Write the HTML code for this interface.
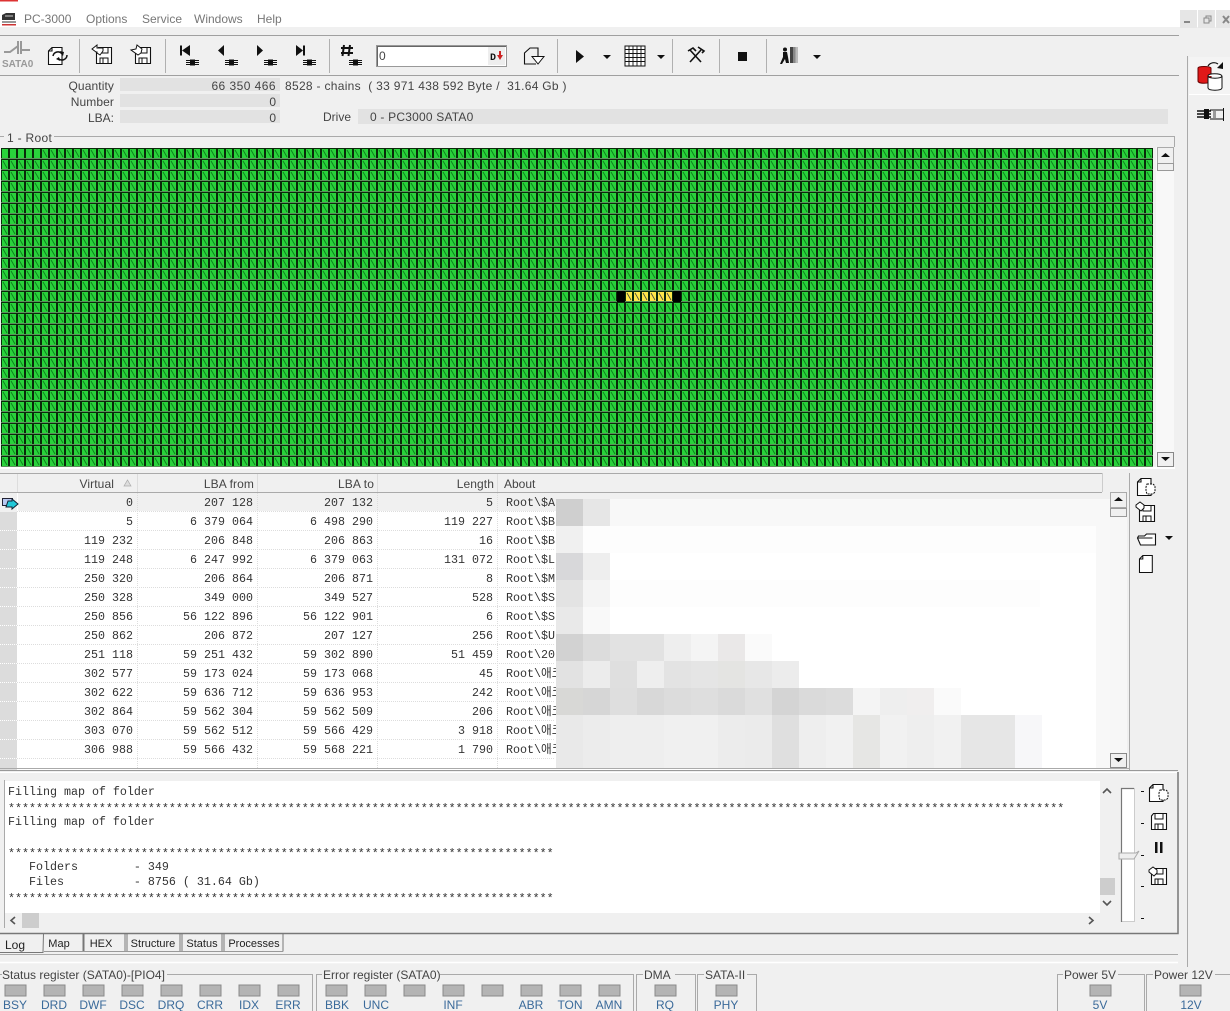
<!DOCTYPE html>
<html><head><meta charset="utf-8"><style>
html,body{margin:0;padding:0;background:#f0f0f0;width:1230px;height:1011px;overflow:hidden}
svg{display:block}
text{font-family:"Liberation Sans","Noto Sans CJK KR",sans-serif;font-size:12px;fill:#444}
.m text,text.m{font-family:"Liberation Mono","Noto Sans CJK KR",monospace;font-size:11.67px;fill:#333}
.e text{text-anchor:end}
.l text{fill:#3a6a9a;text-anchor:middle;font-size:12px}
.g text{fill:#777}
.t text{fill:#222;font-size:11px;text-anchor:middle}
</style></head><body>
<svg width="1230" height="1011" viewBox="0 0 1230 1011" xmlns="http://www.w3.org/2000/svg">
<defs>
<pattern id="c" x="1" y="148" width="8" height="11" patternUnits="userSpaceOnUse">
<rect width="8" height="11" fill="#0a2a0a"/><rect y="10" width="8" height="1" fill="#5c8f5c"/><rect x="1" y="1" width="6" height="9" fill="#29d23b"/><path d="M2 2L6 9" stroke="#0d7d1c" stroke-width=".9"/>
</pattern>
<g id="trk"><path d="M0 1.500h13M0 3.500h13M0 5.500h13" stroke="#111" stroke-width="1.100"/><rect x="4" y="0.500" width="5" height="6" fill="#111"/></g>
<g id="fl"><path d="M2.500.5H15.500V16.500H.5V3Z" fill="#fff" stroke="#111" stroke-width="1.100"/><path d="M4 .5V6H12V.5M4 16.500V11H12V16.500M7 11V16" fill="none" stroke="#111"/></g>
<g id="doc"><path d="M4 .5H14V17.500H.5V4ZM4 .5V4H.5" fill="#fff" stroke="#111" stroke-width="1.100"/></g>
<g id="led"><rect width="21" height="11" fill="#b4b4b4" stroke="#8a8a8a"/></g>
</defs>
<rect width="1230" height="1011" fill="#f0f0f0"/>
<!-- title / menu -->
<rect width="1230" height="27" fill="#fff"/>
<rect x="0" y="0" width="18" height="1.500" fill="#d33"/>
<rect x="1180" y="10" width="17" height="18" fill="#e6e6e6"/><rect x="1198" y="10" width="17" height="18" fill="#e6e6e6"/><rect x="1216" y="10" width="14" height="18" fill="#e6e6e6"/>
<path d="M1184 22h6" stroke="#888" stroke-width="2"/><path d="M1204 18v5h5v-5zM1206 18v-2h5v5h-2" fill="none" stroke="#888"/><path d="M1223 16l6 7M1229 16l-6 7" stroke="#888" stroke-width="2"/>
<path d="M2 20V15l4-2h9v7z" fill="#333"/><path d="M5 16h8" stroke="#ccc"/><rect x="2" y="24" width="14" height="1.500" fill="#c33"/><rect x="2" y="21" width="14" height="2" fill="#999"/>
<g class="g"><text x="24" y="23">PC-3000</text><text x="86" y="23">Options</text><text x="142" y="23">Service</text><text x="194" y="23">Windows</text><text x="257" y="23">Help</text></g>
<!-- toolbar -->
<path d="M0 35.500H1179M0 75.500H1179" stroke="#a0a0a0"/>
<path d="M79.500 39V73M165.500 39V73M329.500 39V73M557.500 39V73M672.500 39V73M719.500 39V73M766.500 39V73" stroke="#b0b0b0"/>
<g stroke="#999" stroke-width="2" fill="none"><path d="M4 52h6l8-6M18 41v13M21 41v13M21 50h9"/></g>
<text x="2" y="67" style="font-size:10px;font-weight:bold;fill:#999">SATA0</text>
<use href="#doc" transform="translate(48,47)"/>
<path d="M53 56a5 5 0 0 1 9-2M67 55a5 5 0 0 1-9 3" fill="none" stroke="#111" stroke-width="1.500"/><path d="M60 51l4 1-1 4zM60 61l-4-2 3-2z" fill="#111"/>
<use href="#fl" transform="translate(96,47)"/><path d="M92 49l5-4v3h6v3l-3 4-3-2v-1h-1z" fill="#fff" stroke="#111"/>
<use href="#fl" transform="translate(135,47)"/><path d="M142 49l-5-4-1 4-5 1 7 5 3-2z" fill="#fff" stroke="#111"/>
<path d="M181 45.500v10" stroke="#111" stroke-width="2"/><path d="M190 45v11l-8-5.500z" fill="#111"/><use href="#trk" transform="translate(186,59)"/>
<path d="M224 45v11l-6-5.500z" fill="#111"/><use href="#trk" transform="translate(225,59)"/>
<path d="M257 45v11l6-5.500z" fill="#111"/><use href="#trk" transform="translate(264,59)"/>
<path d="M296 45v11l7-5.500z" fill="#111"/><path d="M304 45.500v10" stroke="#111" stroke-width="2"/><use href="#trk" transform="translate(303,59)"/>
<path d="M344 45l-1.500 11M350 45l-1.500 11M341 48h12M341 53h12" stroke="#111" stroke-width="2" fill="none"/><use href="#trk" transform="translate(349,59)"/>
<!-- input -->
<rect x="376.500" y="45.500" width="130" height="21" fill="#fff" stroke="#999"/><path d="M377.500 66V46.500H506" stroke="#666" fill="none"/>
<rect x="488" y="47" width="17" height="18" fill="#eee"/>
<text x="490" y="60" class="m" style="font-size:10px;font-weight:bold;fill:#111">D</text><path d="M499 51h2v4h2l-3 5-3-5h2z" fill="#c22"/>
<text x="379" y="60">0</text>
<path d="M538 56V48H530L524.500 53V64H536" fill="none" stroke="#111" stroke-width="1.100"/><path d="M532 56.500H544L538 64Z" fill="#fff" stroke="#111"/>
<path d="M576 50v13l8-6.500z" fill="#111"/><path d="M603 55h8l-4 4z" fill="#111"/>
<rect x="625" y="46" width="20" height="20" fill="#fff" stroke="#111"/><path d="M625 49.500H645M625 53.500H645M625 57.500H645M625 61.500H645M629 46V66M633 46V66M637 46V66M641 46V66" stroke="#111" stroke-width=".9"/>
<path d="M657 55h8l-4 4z" fill="#111"/>
<path d="M690 62l11-12M690 50l11 12M688 51l5-3 3 3M698 47l6 4-2 2" stroke="#111" stroke-width="1.600" fill="none"/>
<rect x="738" y="52" width="9" height="9" fill="#111"/>
<rect x="790" y="47" width="3" height="16" fill="#444"/><rect x="793" y="47" width="2.500" height="16" fill="#888"/><rect x="795.500" y="47" width="2.500" height="16" fill="#bbb"/>
<circle cx="785" cy="49.500" r="2" fill="#111"/><path d="M783 52h4l1 5 1 6h-3l-1-4-3 5h-2l3-7z" fill="#111"/>
<path d="M813 55h8l-4 4z" fill="#111"/>
<!-- info -->
<rect x="120" y="78" width="160" height="13" fill="#e2e2e2"/><rect x="120" y="94" width="160" height="13" fill="#e2e2e2"/><rect x="120" y="110" width="160" height="13" fill="#e2e2e2"/><rect x="358" y="109" width="810" height="15" fill="#e2e2e2"/>
<g class="e"><text x="114" y="90" letter-spacing=".1">Quantity</text><text x="114" y="106" letter-spacing=".1">Number</text><text x="114" y="122">LBA:</text><text x="276" y="90" letter-spacing=".45">66 350 466</text><text x="276" y="106">0</text><text x="276" y="122">0</text></g>
<text x="285" y="90" xml:space="preserve" letter-spacing=".3">8528 - chains  ( 33 971 438 592 Byte /  31.64 Gb )</text>
<text x="323" y="121">Drive</text><text x="370" y="121" letter-spacing=".2">0 - PC3000 SATA0</text>
<!-- map -->
<path d="M0 136.500H1174.500V147" stroke="#aaa" fill="none"/>
<rect x="4" y="130" width="50" height="13" fill="#f0f0f0"/><text x="7" y="142" letter-spacing=".3">1 - Root</text>
<rect x="1" y="148" width="1152" height="319" fill="url(#c)"/>
<g fill="#29d23b"><rect x="2" y="149" width="6" height="9"/><rect x="10" y="149" width="6" height="9"/><rect x="18" y="149" width="6" height="9"/><rect x="26" y="149" width="6" height="9"/><rect x="34" y="149" width="6" height="9"/></g>
<rect x="617" y="291" width="8" height="11" fill="#000"/><rect x="673" y="291" width="8" height="11" fill="#000"/>
<g fill="#ffe64a"><rect x="626" y="292" width="6" height="9"/><rect x="634" y="292" width="6" height="9"/><rect x="642" y="292" width="6" height="9"/><rect x="650" y="292" width="6" height="9"/><rect x="658" y="292" width="6" height="9"/><rect x="666" y="292" width="6" height="9"/></g>
<path d="M627 293l4 7M635 293l4 7M643 293l4 7M651 293l4 7M659 293l4 7M667 293l4 7" stroke="#444" stroke-width=".8"/>
<rect x="1156" y="147" width="18" height="320" fill="#f8f8f8"/>
<rect x="1157.500" y="147.500" width="16" height="16" fill="#f0f0f0" stroke="#aaa"/><path d="M1161 157h9l-4.500-4z" fill="#111"/><rect x="1157.500" y="163.500" width="16" height="7" fill="#f0f0f0" stroke="#999"/>
<rect x="1157.500" y="452.500" width="16" height="14" fill="#f0f0f0" stroke="#888"/><path d="M1161 457h9l-4.500 4z" fill="#111"/>
<rect x="0" y="467" width="1175" height="2" fill="#fff"/>
<!-- table -->
<rect x="0" y="492" width="1110" height="278" fill="#fff"/>
<rect x="18" y="492" width="1092" height="19" fill="#f0f0f0"/>
<rect x="0" y="492" width="17" height="278" fill="#dcdcdc"/>
<rect x="0" y="492" width="17" height="20" fill="#f0f0f0"/>
<path d="M0 473.500H1102M0 492.500H1102" stroke="#aaa"/><path d="M1102.500 473V492" stroke="#ccc"/>
<path d="M17.500 474V492M137.500 474V492M257.500 474V492M377.500 474V492M497.500 474V492" stroke="#ddd"/>
<g stroke="#ddd" stroke-dasharray="1 1"><path d="M17 511.500H555M17 530.500H555M17 549.500H555M17 568.500H555M17 587.500H555M17 606.500H555M17 625.500H555M17 644.500H555M17 663.500H555M17 682.500H555M17 701.500H555M17 720.500H555M17 739.500H555M17 758.500H555"/><path d="M137.500 493V768M257.500 493V768M377.500 493V768M497.500 493V768"/></g>
<path d="M0 530.500H17M0 549.500H17M0 568.500H17M0 587.500H17M0 606.500H17M0 625.500H17M0 644.500H17M0 663.500H17M0 682.500H17M0 701.500H17M0 720.500H17M0 739.500H17M0 758.500H17" stroke="#fff" stroke-dasharray="1 1"/>
<g class="e"><text x="114" y="488" letter-spacing=".1">Virtual</text><text x="254" y="488" letter-spacing=".1">LBA from</text><text x="374" y="488" letter-spacing=".1">LBA to</text><text x="494" y="488" letter-spacing=".1">Length</text></g>
<text x="504" y="488">About</text><path d="M124 486h7l-3.500-6z" fill="#ddd" stroke="#aaa" stroke-width=".7"/>
<rect x="2.500" y="498.500" width="10" height="7" fill="#b8c8f0" stroke="#223"/><path d="M8 501h4v-2l6 5-6 5v-2H6z" fill="#22c8d8" stroke="#123"/>
<g class="m e">
<text x="133" y="506">0</text><text x="253" y="506">207 128</text><text x="373" y="506">207 132</text><text x="493" y="506">5</text>
<text x="133" y="525">5</text><text x="253" y="525">6 379 064</text><text x="373" y="525">6 498 290</text><text x="493" y="525">119 227</text>
<text x="133" y="544">119 232</text><text x="253" y="544">206 848</text><text x="373" y="544">206 863</text><text x="493" y="544">16</text>
<text x="133" y="563">119 248</text><text x="253" y="563">6 247 992</text><text x="373" y="563">6 379 063</text><text x="493" y="563">131 072</text>
<text x="133" y="582">250 320</text><text x="253" y="582">206 864</text><text x="373" y="582">206 871</text><text x="493" y="582">8</text>
<text x="133" y="601">250 328</text><text x="253" y="601">349 000</text><text x="373" y="601">349 527</text><text x="493" y="601">528</text>
<text x="133" y="620">250 856</text><text x="253" y="620">56 122 896</text><text x="373" y="620">56 122 901</text><text x="493" y="620">6</text>
<text x="133" y="639">250 862</text><text x="253" y="639">206 872</text><text x="373" y="639">207 127</text><text x="493" y="639">256</text>
<text x="133" y="658">251 118</text><text x="253" y="658">59 251 432</text><text x="373" y="658">59 302 890</text><text x="493" y="658">51 459</text>
<text x="133" y="677">302 577</text><text x="253" y="677">59 173 024</text><text x="373" y="677">59 173 068</text><text x="493" y="677">45</text>
<text x="133" y="696">302 622</text><text x="253" y="696">59 636 712</text><text x="373" y="696">59 636 953</text><text x="493" y="696">242</text>
<text x="133" y="715">302 864</text><text x="253" y="715">59 562 304</text><text x="373" y="715">59 562 509</text><text x="493" y="715">206</text>
<text x="133" y="734">303 070</text><text x="253" y="734">59 562 512</text><text x="373" y="734">59 566 429</text><text x="493" y="734">3 918</text>
<text x="133" y="753">306 988</text><text x="253" y="753">59 566 432</text><text x="373" y="753">59 568 221</text><text x="493" y="753">1 790</text>
</g>
<g class="m">
<text x="506" y="506">Root\$A</text><text x="506" y="525">Root\$B</text><text x="506" y="544">Root\$B</text><text x="506" y="563">Root\$L</text><text x="506" y="582">Root\$M</text><text x="506" y="601">Root\$S</text><text x="506" y="620">Root\$S</text><text x="506" y="639">Root\$U</text><text x="506" y="658">Root\20</text><text x="506" y="677">Root\애코</text><text x="506" y="696">Root\애코</text><text x="506" y="715">Root\애코</text><text x="506" y="734">Root\애코</text><text x="506" y="753">Root\애코</text>
</g>
<!-- mosaic -->
<rect x="556" y="499" width="540" height="269" fill="#fff"/>
<rect x="556" y="499" width="540" height="27" fill="#f8f8f8"/><rect x="556" y="526" width="540" height="27" fill="#fdfdfd"/>
<rect x="556" y="499" width="27" height="27" fill="#cfcfcf"/><rect x="583" y="499" width="27" height="27" fill="#e6e6e6"/>
<rect x="556" y="526" width="27" height="27" fill="#f0f0f0"/>
<rect x="556" y="553" width="27" height="27" fill="#d8d8da"/><rect x="583" y="553" width="27" height="27" fill="#eeeeee"/>
<rect x="556" y="580" width="27" height="27" fill="#e3e3e3"/><rect x="583" y="580" width="27" height="27" fill="#f4f4f4"/><rect x="610" y="580" width="430" height="27" fill="#fdfdfd"/>
<rect x="556" y="607" width="27" height="27" fill="#e9e9e9"/><rect x="583" y="607" width="27" height="27" fill="#f9f9f9"/>
<g>
<rect x="556" y="634" width="27" height="27" fill="#d2d2d2"/><rect x="583" y="634" width="27" height="27" fill="#dcdcdc"/><rect x="610" y="634" width="54" height="27" fill="#e2e2e2"/><rect x="664" y="634" width="27" height="27" fill="#eeeeee"/><rect x="691" y="634" width="27" height="27" fill="#f4f4f4"/><rect x="718" y="634" width="27" height="27" fill="#eae8e8"/><rect x="745" y="634" width="27" height="27" fill="#fafafa"/>
<rect x="556" y="661" width="27" height="27" fill="#e2e2e2"/><rect x="583" y="661" width="27" height="27" fill="#ececec"/><rect x="610" y="661" width="27" height="27" fill="#dfdfdf"/><rect x="637" y="661" width="27" height="27" fill="#eeeeee"/><rect x="664" y="661" width="27" height="27" fill="#e3e3e3"/><rect x="691" y="661" width="27" height="27" fill="#e5e5e5"/><rect x="718" y="661" width="27" height="27" fill="#e4e4e2"/><rect x="745" y="661" width="27" height="27" fill="#e7e7e7"/><rect x="772" y="661" width="27" height="27" fill="#ececec"/>
<rect x="556" y="688" width="27" height="27" fill="#d8d8d6"/><rect x="583" y="688" width="27" height="27" fill="#d6d6d6"/><rect x="610" y="688" width="27" height="27" fill="#dedede"/><rect x="637" y="688" width="27" height="27" fill="#d8d8d8"/><rect x="664" y="688" width="27" height="27" fill="#dcdcdc"/><rect x="691" y="688" width="27" height="27" fill="#dedede"/><rect x="718" y="688" width="27" height="27" fill="#dadada"/><rect x="745" y="688" width="27" height="27" fill="#e0e0e0"/><rect x="772" y="688" width="27" height="27" fill="#d4d4d4"/><rect x="799" y="688" width="27" height="27" fill="#dadada"/><rect x="826" y="688" width="27" height="27" fill="#dcdcdc"/><rect x="853" y="688" width="27" height="27" fill="#f4f4f4"/><rect x="880" y="688" width="27" height="27" fill="#eeeeee"/><rect x="907" y="688" width="27" height="27" fill="#f0eeee"/><rect x="934" y="688" width="27" height="27" fill="#fafafa"/>
<rect x="556" y="715" width="27" height="53" fill="#e9e9e9"/><rect x="583" y="715" width="27" height="53" fill="#ececec"/><rect x="610" y="715" width="54" height="53" fill="#eeeeee"/><rect x="664" y="715" width="54" height="53" fill="#f0f0f0"/><rect x="718" y="715" width="27" height="53" fill="#ececec"/><rect x="745" y="715" width="27" height="53" fill="#ebebeb"/><rect x="772" y="715" width="27" height="53" fill="#dfdfdf"/><rect x="799" y="715" width="27" height="53" fill="#eeeeee"/><rect x="826" y="715" width="27" height="53" fill="#f1f1f1"/><rect x="853" y="715" width="27" height="53" fill="#e6e6e4"/><rect x="880" y="715" width="27" height="53" fill="#f1f1f1"/><rect x="907" y="715" width="27" height="53" fill="#eeeeee"/><rect x="934" y="715" width="27" height="53" fill="#f1f1f1"/><rect x="961" y="715" width="54" height="53" fill="#e6e6e6"/><rect x="1015" y="715" width="27" height="53" fill="#f7f7f9"/>
</g>
<!-- table scrollbar -->
<rect x="1096" y="493" width="14" height="275" fill="#f8f8f8"/><rect x="556" y="493" width="554" height="6" fill="#f0f0f0"/>
<rect x="1110" y="492" width="17" height="276" fill="#f7f7f7"/>
<rect x="1110.500" y="492.500" width="16" height="15" fill="#f0f0f0" stroke="#aaa"/><path d="M1114 501h9l-4.500-4z" fill="#111"/><rect x="1110.500" y="508.500" width="16" height="8" fill="#f0f0f0" stroke="#999"/>
<rect x="1110.500" y="753.500" width="16" height="14" fill="#f0f0f0" stroke="#888"/><path d="M1114 758h9l-4.500 4z" fill="#111"/>
<path d="M1129.500 473V770M1187.500 56V967" stroke="#aaa"/>
<path d="M0 768.500H1129" stroke="#aaa"/>
<!-- table side icons -->
<use href="#doc" transform="translate(1137,478)"/><path d="M1147 484h6l2 2v6l-2 2h-6l-1-3v-4z" fill="#fff" stroke="#111" stroke-dasharray="2 1"/>
<use href="#fl" transform="translate(1139,505)"/><path d="M1136 505l4-3 4 3v3l-3 3-5-4z" fill="#fff" stroke="#111"/>
<path d="M1137.500 538l1-2h6l2-2h9v11h-15l-3-7zM1137.500 538h15" fill="#fff" stroke="#111" stroke-width="1.100"/><path d="M1165 536h8l-4 4z" fill="#111"/>
<use href="#doc" transform="translate(1139,555) scale(.95,1)"/>
<!-- right panel -->
<rect x="1189" y="57" width="41" height="37" fill="#f4f4f4"/><path d="M1189 94.500H1230" stroke="#fff"/>
<path d="M1198 68c0-2 12-2 13 0v13c-1 3-13 3-13 0z" fill="#e01818" stroke="#600"/>
<path d="M1208 76c0-3 13-3 14 0v12c-1 3-13 3-14 0zM1208 76c1 3 13 3 14 0" fill="#fff" stroke="#111"/>
<path d="M1208 66a7 7 0 0 1 10-2" fill="none" stroke="#111" stroke-width="1.200"/><path d="M1217 68l6-6v7z" fill="#111"/>
<path d="M1197 111h14M1197 114h14M1197 117h14" stroke="#111" stroke-width="1.500"/><rect x="1204" y="109" width="5" height="10" fill="#111"/><path d="M1210 110h13M1210 119h13M1223.500 108v13" fill="none" stroke="#111"/><rect x="1213" y="111" width="3" height="7" fill="#999"/>
<!-- log -->
<path d="M0 770.500H1178" stroke="#999"/><path d="M1178 772V933.500H0" stroke="#777" stroke-width="1.500" fill="none"/><path d="M0 772.500H1177" stroke="#fff"/>
<rect x="5" y="781" width="1095" height="132" fill="#fff"/><path d="M4.500 780V928" stroke="#aaa"/>
<rect x="1100" y="781" width="15" height="147" fill="#f0f0f0"/><rect x="5" y="913" width="1095" height="15" fill="#f0f0f0"/>
<rect x="1100" y="878" width="15" height="17" fill="#cdcdcd"/><rect x="22" y="913" width="17" height="15" fill="#cdcdcd"/>
<path d="M1103 793l4-4 4 4M1103 901l4 4 4-4M15 917l-4 3.500 4 3.500M1089 917l4 3.500-4 3.500" fill="none" stroke="#555" stroke-width="1.600"/>
<g class="m">
<text x="8" y="795">Filling map of folder</text>
<text x="8" y="812">*******************************************************************************************************************************************************</text>
<text x="8" y="825">Filling map of folder</text>
<text x="8" y="857">******************************************************************************</text>
<text x="8" y="870" xml:space="preserve">   Folders        - 349</text>
<text x="8" y="885" xml:space="preserve">   Files          - 8756 ( 31.64 Gb)</text>
<text x="8" y="902">******************************************************************************</text>
</g>
<rect x="1121.500" y="788.500" width="13" height="133" fill="#fff" stroke="#ccc"/><path d="M1121.500 922V788.500H1134" stroke="#777" fill="none" stroke-width="1.200"/>
<path d="M1119 853H1136L1139 851 1134 859H1119Z" fill="#eee" stroke="#aaa"/>
<path d="M1141 791.500h3M1141 823.500h3M1141 855.500h3M1141 886.500h3M1141 918.500h3" stroke="#111"/>
<use href="#doc" transform="translate(1149,784)"/><path d="M1160 790h6l2 2v6l-2 2h-6l-1-3v-4z" fill="#fff" stroke="#111" stroke-dasharray="2 1"/>
<use href="#fl" transform="translate(1151,813)"/>
<rect x="1155" y="842" width="2.500" height="11" fill="#111"/><rect x="1160" y="842" width="2.500" height="11" fill="#111"/>
<use href="#fl" transform="translate(1151,868)"/><path d="M1149 870l4-3 4 3v3l-3 3-5-4z" fill="#fff" stroke="#111"/>
<!-- tabs -->
<path d="M0 952.500H43L43.500 933.500H83V951.500M84 951.500V933.500H125V951.500M127 951.500V933.500H180V951.500M182 951.500V933.500H222V951.500M224 951.500V933.500H283V951.500" fill="none" stroke="#777"/>
<path d="M44 951.500H283" stroke="#999"/>
<g class="t"><text x="15" y="949" style="font-size:12px">Log</text><text x="59" y="947">Map</text><text x="101" y="947">HEX</text><text x="153" y="947">Structure</text><text x="202" y="947">Status</text><text x="254" y="947">Processes</text></g>
<path d="M0 954.500H1178" stroke="#aaa"/><path d="M0 962.500H1178" stroke="#fff" stroke-width="1.500"/>
<!-- status groups -->
<g fill="none" stroke="#aaa">
<path d="M0 974.500H312.500V1011"/><path d="M316.500 1011V974.500H633.500V1011"/><path d="M636.500 1011V974.500H695.500V1011"/><path d="M697.500 1011V974.500H756.500V1011"/><path d="M1057.500 1011V974.500H1144.500V1011"/><path d="M1146.500 1011V974.500H1230"/>
</g>
<g fill="#f0f0f0"><rect x="2" y="968" width="165" height="13"/><rect x="322" y="968" width="118" height="13"/><rect x="643" y="968" width="32" height="13"/><rect x="704" y="968" width="43" height="13"/><rect x="1063" y="968" width="55" height="13"/><rect x="1153" y="968" width="62" height="13"/></g>
<text x="2" y="979">Status register (SATA0)-[PIO4]</text><text x="323" y="979">Error register (SATA0)</text><text x="644" y="979">DMA</text><text x="705" y="979">SATA-II</text><text x="1064" y="979">Power 5V</text><text x="1154" y="979">Power 12V</text>
<use href="#led" x="5" y="985"/><use href="#led" x="44" y="985"/><use href="#led" x="83" y="985"/><use href="#led" x="122" y="985"/><use href="#led" x="161" y="985"/><use href="#led" x="200" y="985"/><use href="#led" x="239" y="985"/><use href="#led" x="278" y="985"/>
<use href="#led" x="326" y="985"/><use href="#led" x="365" y="985"/><use href="#led" x="404" y="985"/><use href="#led" x="443" y="985"/><use href="#led" x="482" y="985"/><use href="#led" x="521" y="985"/><use href="#led" x="560" y="985"/><use href="#led" x="599" y="985"/>
<use href="#led" x="655" y="985"/><use href="#led" x="716" y="985"/><use href="#led" x="1090" y="985"/><use href="#led" x="1180" y="985"/>
<g class="l"><text x="15" y="1009">BSY</text><text x="54" y="1009">DRD</text><text x="93" y="1009">DWF</text><text x="132" y="1009">DSC</text><text x="171" y="1009">DRQ</text><text x="210" y="1009">CRR</text><text x="249" y="1009">IDX</text><text x="288" y="1009">ERR</text><text x="337" y="1009">BBK</text><text x="376" y="1009">UNC</text><text x="453" y="1009">INF</text><text x="531" y="1009">ABR</text><text x="570" y="1009">TON</text><text x="609" y="1009">AMN</text><text x="665" y="1009">RQ</text><text x="726" y="1009">PHY</text><text x="1100" y="1009">5V</text><text x="1191" y="1009">12V</text></g>
</svg>
</body></html>
